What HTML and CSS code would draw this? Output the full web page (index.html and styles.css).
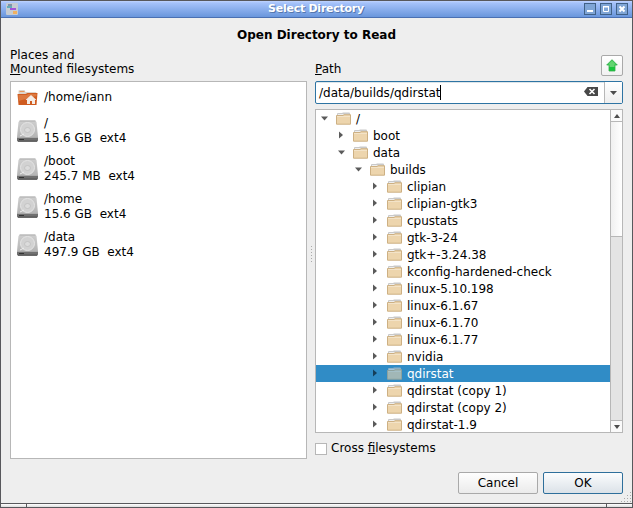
FILE: index.html
```html
<!DOCTYPE html>
<html lang="en">
<head>
<meta charset="utf-8">
<title>Select Directory</title>
<link rel="stylesheet" href="styles.css">
<script src="icons.js" defer></script>
</head>
<body>
<div class="window">
  <header class="titlebar">
    <svg class="app-icon" viewBox="0 0 12 12"><rect width="12" height="12" rx="1" fill="#c5cbd2"/><rect x="2" y="1" width="4" height="2" fill="#8092aa"/><rect x="1" y="3" width="5" height="2" fill="#62adb9"/><rect x="4" y="5" width="6" height="2" fill="#a454d8"/><rect x="7" y="8" width="4" height="3" fill="#f0b060"/></svg>
    <span class="title">Select Directory</span>
    <div class="controls">
      <svg viewBox="0 0 12 12"><rect class="ctl" x=".5" y=".5" width="11" height="11"/><path d="M3 8h6" stroke="#fff" stroke-width="2"/></svg>
      <svg viewBox="0 0 12 12"><rect class="ctl" x=".5" y=".5" width="11" height="11"/><path d="M3.500 4v4.500h5V4zM3 3.500h6" fill="none" stroke="#fff"/></svg>
      <svg viewBox="0 0 12 12"><rect class="ctl" x=".5" y=".5" width="11" height="11"/><path d="M3.500 3.500l5 5M8.500 3.500l-5 5" stroke="#fff" stroke-width="2"/></svg>
    </div>
  </header>
  <main class="dialog">
    <h1>Open Directory to Read</h1>
    <div class="panes">
      <section class="left">
        <div class="places-label">Places and<br><u>M</u>ounted filesystems</div>
        <ul class="places">
          <li class="place home"><svg viewBox="0 0 20 17"><path d="M1 2q0-1 1-1h5l1 2h10q1 0 1 1v5H1z" fill="#ddd5cc"/><path d="M2 2.500h5" stroke="#e79a60"/><path d="M0 5h8l2-1h10l-1 12H1z" fill="#cf5c20"/><path d="M1 6h8l2-1h8v2L1 12z" fill="#dc7940"/><path d="M8 11l5.500-5 5.500 5h-1.500v4h-3v-3h-2v3h-3v-4z" fill="#f4ece6"/></svg><span>/home/iann</span></li>
          <li class="place"><i data-icon="disk"></i><span>/<br>15.6 GB&nbsp; ext4</span></li>
          <li class="place"><i data-icon="disk"></i><span>/boot<br>245.7 MB&nbsp; ext4</span></li>
          <li class="place"><i data-icon="disk"></i><span>/home<br>15.6 GB&nbsp; ext4</span></li>
          <li class="place"><i data-icon="disk"></i><span>/data<br>497.9 GB&nbsp; ext4</span></li>
        </ul>
      </section>
      <div class="splitter"><span class="grip"></span></div>
      <section class="right">
        <div class="path-row">
          <label><u>P</u>ath</label>
          <button class="up"><svg width="12" height="13" viewBox="0 0 12 13"><path d="M6 .7L11.300 6H9v6H3V6H.7z" fill="#18c53d" stroke="#34ad4a" stroke-width=".8"/><path d="M6 1.500L10 5.500H8.500V8h-5V5.500H2z" fill="#7cd883" opacity=".75"/></svg></button>
        </div>
        <div class="combo">
          <span class="value">/data/builds/qdirstat</span><span class="caret"></span>
          <svg class="clear" width="14" height="9" viewBox="0 0 14 9"><path d="M0 4.500L3.500 0H14v9H3.500z" fill="#484848"/><path d="M5.500 2l5 5M10.500 2l-5 5" stroke="#fff" stroke-width="1.600"/></svg>
          <span class="drop"><svg width="7" height="4"><path d="M0 0h7L3.500 4z" fill="#4d4d4d"/></svg></span>
        </div>
        <div class="tree">
          <ul class="rows">
            <li class="row d0 open"><span>/</span></li>
            <li class="row d1"><span>boot</span></li>
            <li class="row d1 open"><span>data</span></li>
            <li class="row d2 open"><span>builds</span></li>
            <li class="row d3"><span>clipian</span></li>
            <li class="row d3"><span>clipian-gtk3</span></li>
            <li class="row d3"><span>cpustats</span></li>
            <li class="row d3"><span>gtk-3-24</span></li>
            <li class="row d3"><span>gtk+-3.24.38</span></li>
            <li class="row d3"><span>kconfig-hardened-check</span></li>
            <li class="row d3"><span>linux-5.10.198</span></li>
            <li class="row d3"><span>linux-6.1.67</span></li>
            <li class="row d3"><span>linux-6.1.70</span></li>
            <li class="row d3"><span>linux-6.1.77</span></li>
            <li class="row d3"><span>nvidia</span></li>
            <li class="row d3 selected"><span>qdirstat</span></li>
            <li class="row d3"><span>qdirstat (copy 1)</span></li>
            <li class="row d3"><span>qdirstat (copy 2)</span></li>
            <li class="row d3"><span>qdirstat-1.9</span></li>
          </ul>
          <div class="scroll">
            <span class="step"><svg width="6" height="4"><path d="M0 4h6L3 0z" fill="#4d4d4d"/></svg></span>
            <span class="thumb"></span>
            <span class="track"></span>
            <span class="step end"><svg width="6" height="4"><path d="M0 0h6L3 4z" fill="#4d4d4d"/></svg></span>
          </div>
        </div>
        <label class="check"><span class="box"></span><span>Cross <u>f</u>ilesystems</span></label>
      </section>
    </div>
    <footer class="actions"><button class="btn">Cancel</button><button class="btn ok">OK</button></footer>
    <svg class="resize" width="10" height="10" viewBox="0 0 10 10"><path d="M9 0h1M6 3h1M9 3h1M3 6h1M6 6h1M9 6h1M0 9h1M3 9h1M6 9h1M9 9h1" stroke="#aaa" stroke-width="1" transform="translate(0 .5)"/></svg>
  </main>
  <div class="frame-bottom"><span></span><span></span><span></span></div>
</div>
</body>
</html>
```

FILE: styles.css
```css
* { box-sizing: border-box; }
body { margin: 0; overflow: hidden; font: 12px/15px "DejaVu Sans", sans-serif; color: #000; }
ul, h1 { margin: 0; padding: 0; list-style: none; }
button { font: inherit; color: inherit; padding: 0; margin: 0; }
svg { display: block; flex: none; }
u { text-decoration: underline; text-decoration-thickness: 1px; text-underline-offset: 1px; text-decoration-skip-ink: none; }
.window { width: 633px; height: 508px; display: flex; flex-direction: column; border: 1px solid #58585c; background: #eee; }
.titlebar { height: 17px; flex: none; display: flex; justify-content: space-between; align-items: center; padding: 0 4px 0 5px; border-bottom: 1px solid #4a70b2; background: linear-gradient(#c0d4ff 0, #a5c2fa 2px, #6996dc 100%); }
.app-icon { width: 12px; height: 12px; margin-right: 30px; }
.title { color: #fff; font-size: 11px; font-weight: bold; line-height: 14px; letter-spacing: -.25px; text-shadow: 1px 1px #5577ad; }
.controls { display: flex; gap: 4px; }
.controls svg { width: 12px; height: 12px; }
.ctl { fill: #7fa5d6; stroke: #416187; }
.dialog { position: relative; flex: 1; min-height: 0; padding: 9px 9px 0; display: flex; flex-direction: column; }
h1 { font-size: 12px; line-height: 16px; text-align: center; }
.panes { display: flex; height: 417px; margin-top: 4px; }
.left { width: 297px; display: flex; flex-direction: column; }
.places-label { line-height: 14px; height: 34px; padding-top: 1px; }
.places { height: 378px; border: 1px solid #b7b7b7; background: #fff; padding: 3px 6px; }
.place { height: 38px; display: flex; align-items: center; gap: 6px; }
.place.home { height: 24px; margin-bottom: 3px; }
.place.home svg { width: 21px; height: 17px; }
.place i { width: 21px; height: 22px; }
.splitter { width: 8px; display: flex; justify-content: center; padding-top: 198px; }
.grip { width: 3px; height: 18px; background: radial-gradient(circle, #aaa 0 .6px, transparent .8px) 0 0 / 3px 3px; }
.right { width: 308px; }
.path-row { display: flex; justify-content: space-between; height: 34px; padding-top: 8px; }
.path-row label { padding-top: 7px; }
.up { width: 22px; height: 21px; display: grid; place-items: center; border: 1px solid #a9a9a9; border-radius: 2px; background: linear-gradient(#fff, #f1f1f1); }
.combo { height: 23px; display: flex; align-items: center; border: 1px solid #2e74a3; border-radius: 2px; background: #fff; padding-left: 3px; box-shadow: inset 0 1px #dde5e9; }
.value { padding-top: 1px; }
.caret { width: 1px; height: 15px; background: #000; }
.clear { margin-left: auto; margin-right: 6px; position: relative; top: -1px; }
.drop { width: 18px; height: 21px; display: grid; place-items: center; border-left: 1px solid #b7b7b7; background: linear-gradient(#fff, #eee); }
.tree { height: 324px; margin-top: 5px; display: flex; border: 1px solid #b7b7b7; background: #fff; overflow: hidden; }
.rows { flex: 1; }
.row { height: 17px; display: flex; align-items: center; line-height: 16px; white-space: pre; }
.row span { padding-top: 1px; }
.row svg { width: 15px; height: 13px; margin-right: 5px; }
.row .arrow { width: 8px; height: 8px; margin: 0 8px 1px 4px; }
.d1 { padding-left: 17px; } .d2 { padding-left: 34px; } .d3 { padding-left: 51px; }
.selected { background: #308cc6; color: #fff; }
.selected .arrow path { fill: #153f5a; }
.selected .folder { opacity: .6; }
.scroll { width: 12px; display: flex; flex-direction: column; border-left: 1px solid #b7b7b7; background: #e4e4e4; }
.step { height: 12px; display: grid; place-items: center; background: #fafafa; border-bottom: 1px solid #b7b7b7; }
.thumb { height: 115px; background: linear-gradient(90deg, #f0f0f0, #fff); border-bottom: 1px solid #b7b7b7; }
.track { flex: 1; }
.step.end { border: 0; border-top: 1px solid #b7b7b7; }
.check { display: flex; align-items: center; gap: 4px; height: 15px; margin-top: 8px; }
.box { width: 12px; height: 12px; border: 1px solid #b7b7b7; background: #fff; }
.actions { display: flex; justify-content: flex-end; gap: 5px; margin-top: 8px; }
.btn { width: 80px; height: 22px; padding-top: 1px; border: 1px solid #a9a9a9; border-radius: 2px; background: linear-gradient(#fefefe, #ebebeb); }
.ok { border-color: #2e6f9b; background: linear-gradient(#fbfcfd, #dbe2e8); }
.resize { position: absolute; right: 1px; bottom: 1px; }
.frame-bottom { height: 4px; flex: none; display: flex; gap: 1px; border-top: 1px solid #58585c; background: #58585c; }
.frame-bottom span { height: 3px; background: linear-gradient(#fff, #ddd); }
.frame-bottom span:nth-child(1), .frame-bottom span:nth-child(3) { width: 25px; }
.frame-bottom span:nth-child(2) { flex: 1; }
```

FILE: icons.js
```javascript
const disk = `<svg width="21" height="22" viewBox="0 0 21 22"><defs><linearGradient id="g" x1="0" y1="0" x2="0" y2="1"><stop stop-color="#cfcfcf"/><stop offset="1" stop-color="#b5b5b5"/></linearGradient></defs><path d="M3 .5h15l1.500 1.500L21 17H0L1.500 2z" fill="url(#g)"/><path d="M2.500 1h16" stroke="#b0b0b0"/><ellipse cx="10.500" cy="9.500" rx="7" ry="7" fill="#d2d2d2" stroke="#e5e5e5"/><ellipse cx="10.500" cy="10" rx="3" ry="2.500" fill="#dcdcdc" stroke="#bbb" stroke-width=".7"/><path d="M7 14l-4 2" stroke="#eee"/><path d="M0 17h21v3.500q0 1-1 1H1q-1 0-1-1z" fill="#707070"/><path d="M0 17.500h21" stroke="#aaa"/><path d="M2 19.500h5" stroke="#333"/><path d="M1 21.200h19" stroke="#444"/></svg>`;
const folder = `<svg class="folder" viewBox="0 0 15 13"><path d="M1 5V2q0-1 1-1h4l1-.5h6q1 0 1 1V5z" fill="#c9c9c9"/><path d="M2 2.500h11" stroke="#eee"/><path d="M.5 3.500H7l1-.8h6.500v9.500H.5z" fill="#edd5ad" stroke="#cdb083"/><path d="M1 4.500h13" stroke="#f3e3c8"/></svg>`;
document.querySelectorAll('[data-icon=disk]').forEach(e => e.innerHTML = disk);
document.querySelectorAll('.row').forEach(e => {
  const d = e.classList.contains('open') ? 'M1 2.500h7L4.500 6.500z' : 'M2 .5v7L6 4z';
  e.insertAdjacentHTML('afterbegin', `<svg class="arrow" viewBox="0 0 8 8"><path d="${d}" fill="#5a5a5a"/></svg>${folder}`);
});
```
